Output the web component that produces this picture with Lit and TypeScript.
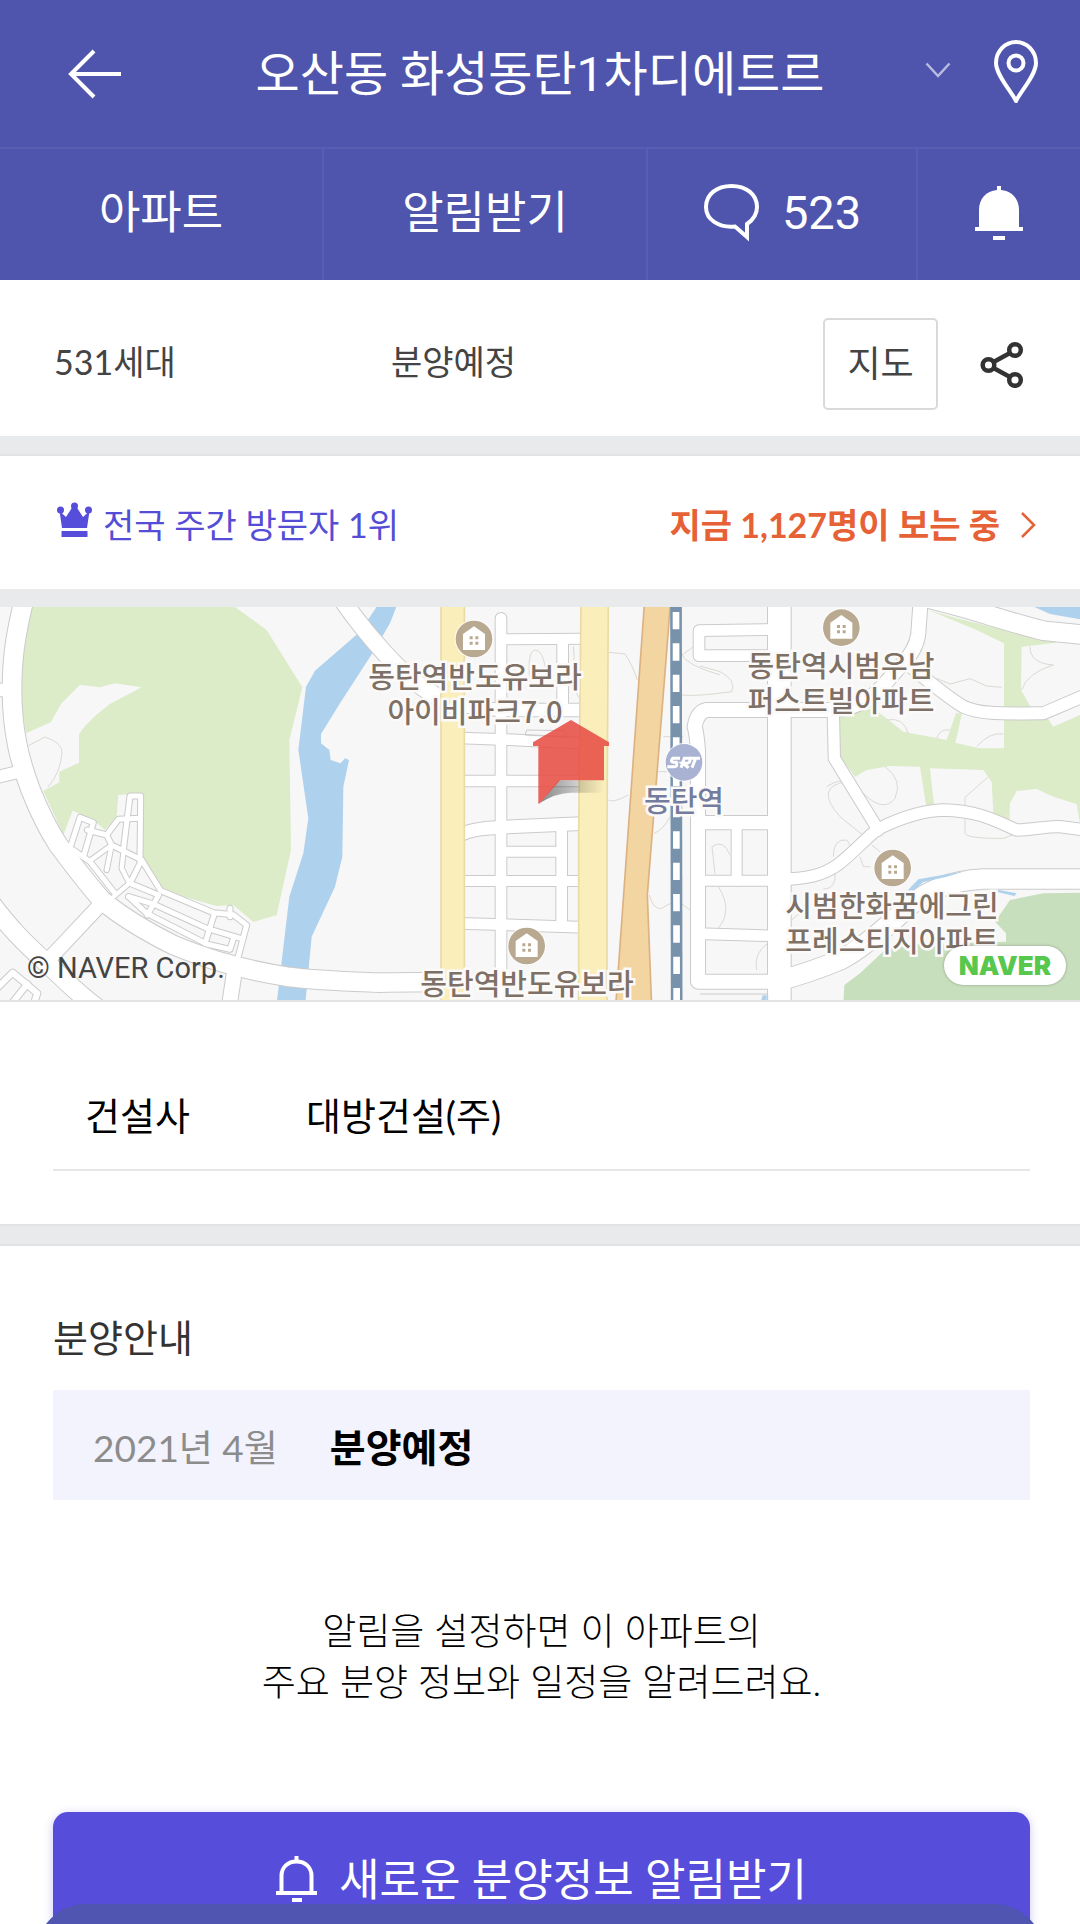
import { LitElement, html, svg, css } from "lit";
import { customElement } from "lit/decorators.js";

/* ---------- Map data (map units: three per pixel at a 1080px wide page) ---------- */

interface Road {
  d: string;
  w: number;
}

const ROADS: Road[] = [
  // western ring road and its branches
  { d: "M72 0C45 110 36 180 36 270C36 400 62 490 92 570C120 640 145 690 175 735C230 810 262 850 305 900C370 955 440 995 520 1035C640 1085 740 1110 860 1130C960 1142 1040 1144 1140 1148C1220 1146 1260 1146 1350 1146", w: 56 },
  { d: "M-20 270H36", w: 38 },
  { d: "M-20 534L70 512", w: 36 },
  { d: "M-30 905C30 985 70 1025 130 1080C180 1125 230 1180 300 1230", w: 54 },
  { d: "M140 1085L300 915", w: 42 },
  { d: "M704 1110L686 1230", w: 44 },
  { d: "M1020 -10C1060 50 1100 100 1150 155C1200 210 1250 260 1340 305", w: 50 },
  // central grid
  { d: "M1503 55V1230", w: 32 },
  { d: "M1503 118L1760 116", w: 30 },
  { d: "M1688 118V330", w: 32 },
  { d: "M1380 318L1503 330L1760 330", w: 38 },
  { d: "M1380 414L1503 418L1760 430", w: 32 },
  { d: "M1380 543H1760", w: 32 },
  { d: "M1380 706Q1410 686 1500 682L1760 670", w: 38 },
  { d: "M1685 670V980", w: 32 },
  { d: "M1503 755H1685", w: 30 },
  { d: "M1380 843H1760", w: 30 },
  { d: "M1380 970L1760 982", w: 32 },
  // east of the railway
  { d: "M2338 -20V1230", w: 68 },
  { d: "M2338 88L2097 92V167H2338", w: 32 },
  { d: "M2338 330H2120Q2092 335 2084 380Q2090 400 2094 450V1145H2338", w: 42 },
  { d: "M2094 668H2338", w: 40 },
  { d: "M2210 668V842", w: 30 },
  { d: "M2094 842H2338", w: 30 },
  { d: "M2094 1001L2338 1008", w: 32 },
  { d: "M2338 330H2500C2620 320 2650 250 2700 200C2740 160 2752 130 2755 100L2762 0", w: 42 },
  { d: "M2500 340L2503 475L2635 690", w: 34 },
  { d: "M2338 838C2420 838 2470 825 2515 793C2570 750 2610 700 2640 684C2700 655 2760 632 2830 630C2940 632 2990 665 3050 690C3100 690 3140 678 3180 680L3270 692", w: 34 },
  { d: "M2720 190C2780 240 2840 290 2890 320C2940 342 2990 341 3130 340L3270 280", w: 36 },
  { d: "M2760 -10C2900 20 3000 60 3130 92L3270 106", w: 56 },
  { d: "M3270 837H2950C2850 842 2780 870 2720 925C2650 990 2580 1050 2520 1080C2460 1105 2420 1120 2338 1142", w: 58 },
  // residential lanes
  { d: "M213 735L240 652L280 668L252 765", w: 15 },
  { d: "M205 740L270 785L345 880", w: 15 },
  { d: "M262 690L320 705L335 735L425 780L482 872L640 938L700 944L740 975L708 1095", w: 15 },
  { d: "M320 705L355 658L420 655", w: 15 },
  { d: "M370 750L390 588L422 588L420 780", w: 15 },
  { d: "M270 782L335 735L320 810", w: 13 },
  { d: "M370 760L365 805L388 850L335 895", w: 13 },
  { d: "M425 780L390 850L476 885L442 945", w: 15 },
  { d: "M386 890L460 912L620 985L722 1015", w: 15 },
  { d: "M386 890L440 940L620 1032L690 1048L702 1010", w: 15 },
  { d: "M642 945L615 1030", w: 15 },
  { d: "M690 950V925", w: 15 },
  { d: "M-20 1175L38 1118L112 1180L95 1230", w: 18 },
  { d: "M20 1230L82 1152", w: 18 },
];

const PATHS = [
  "M85 437L135 411Q190 430 186 460Q180 520 145 560",
  "M1590 250Q1580 150 1607 150Q1635 155 1640 240",
  "M1720 140Q1725 170 1720 200Q1722 290 1742 296",
  "M1827 157L1875 162Q1895 190 1912 240",
  "M1825 600Q1840 610 1885 585",
  "M1962 700Q1990 690 2010 650",
  "M1948 885Q1960 930 1985 925Q2030 890 2070 930",
  "M1990 410H2050M1975 515H2000",
  "M2046 165L2080 140M2046 165Q2060 195 2160 225M2046 285Q2090 290 2195 275Q2210 240 2160 215L2100 198",
  "M2136 740Q2170 715 2190 765M2136 740L2145 822",
  "M2155 860Q2200 930 2155 985",
  "M2270 1110Q2260 1060 2303 1030",
  "M2480 560Q2520 535 2540 545Q2440 560 2520 650L2600 715",
  "M2655 500Q2710 540 2685 595Q2650 640 2590 580",
  "M2810 235L2850 252L2910 236L2960 258L3005 262",
  "M3090 140Q3090 190 3160 195Q3080 220 3065 270",
  "M2965 530L2895 592V700Q2900 716 3010 715L3050 700",
  "M2500 770Q2500 715 2540 720Q2560 740 2545 760",
  "M2580 770L2590 800L2612 800M2615 735L2640 755",
  "M2930 440Q2970 395 3010 402M2810 415Q2820 385 2850 390",
  "M2660 360Q2710 350 2725 400",
  "M2375 960Q2400 935 2430 930",
  "M2505 820Q2510 865 2470 868",
];

const HOMES = [
  [1422, 117],
  [1580, 1038],
  [2524, 83],
  [2678, 804],
];

interface Place {
  x: number;
  y: number;
  lines: string[];
  station?: boolean;
}

/* Centres of the labels, in pixels of a 1080 x 393 map. */
const PLACES: Place[] = [
  { x: 475, y: 86, lines: ["동탄역반도유보라", "아이비파크7.0"] },
  { x: 527, y: 375, lines: ["동탄역반도유보라"] },
  { x: 841, y: 75, lines: ["동탄역시범우남", "퍼스트빌아파트"] },
  { x: 892, y: 315, lines: ["시범한화꿈에그린", "프레스티지아파트"] },
  { x: 684, y: 192, lines: ["동탄역"], station: true },
];

@customElement("location-map")
export class LocationMap extends LitElement {
  static styles = css`
    :host {
      display: block;
      border-bottom: 2px solid #e2e3e4;
    }
    .map {
      position: relative;
      overflow: hidden;
      aspect-ratio: 1080 / 393;
      background: #f7f7f7;
    }
    .canvas {
      display: block;
      width: 100%;
      height: 100%;
    }
    .place {
      position: absolute;
      transform: translate(-50%, -50%);
      font: 500 29px/35px "Noto Sans CJK KR", sans-serif;
      color: #7d7066;
      text-align: center;
      white-space: nowrap;
      -webkit-text-stroke: 5px #fbfaf8;
      paint-order: stroke fill;
    }
    .station {
      color: #747c9d;
    }
    .credit {
      position: absolute;
      left: 27px;
      bottom: 14px;
      font: 400 29px/36px Roboto, sans-serif;
      color: #444;
    }
    .brand {
      position: absolute;
      right: 14px;
      bottom: 15px;
      padding: 0 15px;
      border-radius: 20px;
      background: #fff;
      box-shadow: 0 0 3px rgba(0, 0, 0, 0.3);
      font: 900 26px/39px Inter, sans-serif;
      color: #57c74e;
      text-decoration: none;
    }
  `;

  render() {
    return html`
      <div class="map">
        <svg class="canvas" viewBox="0 21 3240 1179" preserveAspectRatio="none" aria-hidden="true">
          <defs>
            <linearGradient id="shade" x1="0" x2="1" y1="0" y2="0">
              <stop offset="0" stop-color="#000" stop-opacity=".45" />
              <stop offset="1" stop-color="#000" stop-opacity="0" />
            </linearGradient>
          </defs>
          <g fill="#dcebc8">
            <path d="M100 0H675L705 21L800 90L907 262L868 420L873 750L830 945L760 966L700 915L650 918L480 870L425 785L430 580L355 585L350 650L315 690L280 660L218 632L190 705L130 573L178 547V515L237 488V403Q260 365 330 312L425 262L345 250L300 262L240 254L185 310L152 367L78 400L62 300L70 150Z" />
            <path d="M2785 30L2870 55L3170 128L3065 140L3063 270L3090 318L3140 350L3160 380L3240 345V670L3230 612L3160 590L3110 567L3050 573L3030 610L3028 660L2980 640L2975 545L2950 510L2790 505L2802 615L2778 615L2760 500L2670 498L2600 510L2565 530L2520 470L2517 345L2620 325L2710 395L2840 420L2868 340H2886L2866 428L2935 445H3012V130L2930 90Z" />
          </g>
          <path fill="#c8dfbd" d="M2530 1215L2533 1155L2580 1120L2660 1045L2760 1030L3018 1025L3018 1000L2985 965L3030 900L3130 880L3240 878V1215Z" />
          <path fill="none" stroke="#dcd9d3" stroke-width="3" d=${PATHS.join("")} />
          <g fill="#aed1ee">
            <path d="M1135 0L1127 25L1080 95L945 212L918 260L895 450L925 655L910 760L868 890L842 1110L830 1210H916L935 1010L1005 860L1027 770L1030 560L1047 480L1035 475L1022 490L992 480L988 450L963 430V402L1020 310L1120 155L1170 70L1197 0Z" />
            <path d="M2284 1200L2288 1186H2300V1200Z" />
          </g>
          <g fill="none" stroke="#cbcbcb" stroke-linecap="round" stroke-linejoin="round">
            ${ROADS.map((r) => svg`<path d=${r.d} stroke-width=${r.w + 6} />`)}
          </g>
          <g fill="none" stroke="#fff" stroke-linecap="round" stroke-linejoin="round">
            ${ROADS.map((r) => svg`<path d=${r.d} stroke-width=${r.w} />`)}
          </g>
          <g fill="#aed1ee">
            <path d="M3090 15H3240V58L3150 42Z" />
            <path d="M2722 872L2755 838L2900 812L2840 830L2770 846L2740 872Z" />
            <path d="M2985 868L3050 880L3043 888L2995 877Z" />
          </g>
          <g fill="none" stroke="#cbcbcb" stroke-width="3">
            <path d="M1575 405L1580 390L1690 392L1700 412Z" />
            <path d="M2100 1182H2303V1205" />
          </g>
          <g fill="#faeebb" stroke="#e8dba6" stroke-width="5">
            <path d="M1323 0H1393V1220H1323Z" />
            <path d="M1743 0H1825L1821 700V1220H1736V700Z" />
          </g>
          <path fill="#f3d5a1" stroke="#dcb283" stroke-width="5" d="M1934 0H2012L1998 180L1942 885L1955 1220H1847Z" />
          <path fill="none" stroke="#7792aa" stroke-width="35" d="M2028 0L2030 1220" />
          <path fill="none" stroke="#fff" stroke-width="20" stroke-dasharray="52 42" d="M2028 36L2030 1220" />
          ${HOMES.map(
            ([x, y]) => svg`
              <g transform="translate(${x} ${y})">
                <circle r="58" fill="#fff" opacity=".8" />
                <circle r="55" fill="#b8a990" />
                <path fill="#fff" d="M0-38L33-15V33H-33V-15Z" />
                <path fill="#b8a990" d="M-13-8H-4V1H-13ZM4-8H13V1H4ZM-13 8H-4V17H-13ZM4 8H13V17H4Z" />
              </g>
            `,
          )}
          <circle cx="2052" cy="487" r="58" fill="#fff" opacity=".8" />
          <circle cx="2052" cy="487" r="55" fill="#a9b2d3" />
          <g fill="none" stroke="#fff" stroke-width="9">
            <path d="M2040 475H2018Q2009 486 2021 487H2029Q2034 499 2024 500H2002" />
            <path d="M2043 503L2053 475H2068Q2074 488 2060 490H2048L2066 503" />
            <path d="M2067 475H2100M2087 475L2076 503" />
          </g>
          <path fill="url(#shade)" d="M1620 609L1675 541H1812V578H1710Q1665 580 1620 609Z" />
          <path fill="#e64b41" opacity=".86" d="M1713 360L1827 427V438H1812V541H1680L1618 611H1615V438H1599V427Z" />
        </svg>
        ${PLACES.map(
          (p) => html`
            <div
              class="place ${p.station ? "station" : ""}"
              style="left:${(p.x / 1080) * 100}%;top:${(p.y / 393) * 100}%"
            >
              ${p.lines.map((line) => html`<div>${line}</div>`)}
            </div>
          `,
        )}
        <span class="credit">© NAVER Corp.</span>
        <a class="brand" href="#map">NAVER</a>
      </div>
    `;
  }
}

@customElement("app-root")
export class AppRoot extends LitElement {
  static styles = css`
    :host {
      display: block;
      position: relative;
      height: 100vh;
      overflow: hidden;
      background: #fff;
      color: #000;
      font: 400 38px/51px Lato, "Noto Sans CJK KR", sans-serif;
    }
    * {
      box-sizing: border-box;
    }
    h1,
    h2,
    p,
    dl,
    dd {
      margin: 0;
      font-weight: 400;
    }
    button {
      padding: 0;
      border: 0;
      background: none;
      color: inherit;
      font: inherit;
    }
    a {
      color: inherit;
      text-decoration: none;
    }
    svg {
      display: block;
    }
    .page {
      height: 100%;
      overflow-y: auto;
      scrollbar-width: none;
    }
    .header {
      background: #4f55ac;
      color: #fff;
      font-family: Roboto, "Noto Sans CJK KR", sans-serif;
    }
    .bar {
      display: grid;
      grid-template-columns: 1fr auto 1fr;
      align-items: center;
      height: 149px;
      padding: 0 41px;
      border-bottom: 2px solid #585eb1;
    }
    .back {
      justify-self: start;
      margin-left: 26px;
    }
    .title {
      padding-top: 2px;
      font-size: 48px;
      line-height: 64px;
    }
    .actions {
      display: flex;
      align-items: center;
      justify-content: flex-end;
      gap: 42px;
    }
    .tabs {
      display: grid;
      grid-template-columns: 30fr 30fr 25fr 15fr;
      height: 131px;
      font-size: 45px;
    }
    .tab {
      display: flex;
      align-items: center;
      justify-content: center;
      gap: 22px;
      padding-bottom: 3px;
      border-right: 2px solid #585eb1;
    }
    .tab:last-child {
      border-right: 0;
    }
    .count {
      padding-bottom: 2px;
      font-size: 47px;
    }
    .summary {
      display: flex;
      align-items: center;
      height: 156px;
      padding: 12px 56px 0 54px;
      color: #444;
      font-size: 34px;
    }
    .facts {
      display: grid;
      grid-template-columns: 1fr 1fr;
      flex: 1;
      margin-right: 95px;
      padding-bottom: 6px;
    }
    .map-button {
      width: 115px;
      height: 92px;
      margin-right: 42px;
      padding-bottom: 2px;
      border: 2px solid #d9d9d9;
      border-radius: 5px;
      font-size: 36px;
    }
    .band {
      height: 20px;
      background: #e9eaec;
      border-bottom: 2px solid #e2e3e5;
    }
    .band.plain {
      height: 18px;
      border-bottom: 0;
    }
    .band.ruled {
      height: 22px;
      border-top: 2px solid #e2e3e5;
    }
    .visitors {
      display: flex;
      align-items: center;
      justify-content: space-between;
      height: 133px;
      padding: 4px 44px 0 57px;
      font-size: 34px;
    }
    .rank {
      display: flex;
      align-items: center;
      gap: 11px;
      color: #554dd6;
    }
    .crown {
      margin-bottom: 10px;
    }
    .watching {
      display: flex;
      align-items: center;
      gap: 20px;
      color: #e66236;
      font-weight: 700;
    }
    .builder {
      padding: 60px 50px 53px 53px;
    }
    .row {
      display: flex;
      padding: 28px 32px;
      border-bottom: 2px solid #e6e7e8;
    }
    .row dt {
      width: 221px;
    }
    .guide {
      padding: 66px 50px 0 53px;
    }
    .heading {
      font-size: 38px;
      color: #333;
    }
    .schedule {
      display: flex;
      align-items: center;
      gap: 52px;
      height: 110px;
      margin-top: 27px;
      padding: 4px 40px 0;
      background: #f2f3fc;
    }
    .date {
      color: #8c8c8c;
      font-size: 37px;
    }
    .stage {
      font-size: 39px;
      font-weight: 700;
    }
    .note {
      margin: 105px 0;
      font-size: 37px;
      text-align: center;
      font-weight: 300;
    }
    .subscribe {
      display: flex;
      align-items: center;
      justify-content: center;
      gap: 22px;
      width: 100%;
      height: 136px;
      padding-bottom: 2px;
      border-radius: 15px;
      background: #564ddb;
      box-shadow: 0 2px 10px rgba(86, 77, 219, 0.3);
      color: #fff;
      font-size: 44px;
    }
    .sheet {
      position: absolute;
      left: 36px;
      right: 36px;
      bottom: 0;
      height: 20px;
      overflow: hidden;
    }
    .sheet-body {
      height: 100px;
      border-radius: 50px;
      background: #4f55b0;
    }
  `;

  render() {
    return html`
      <div class="page">
        <header class="header">
          <div class="bar">
            <a class="back" href="#back" aria-label="뒤로">
              <svg width="56" height="50" viewBox="0 0 56 50" fill="none" stroke="#fff" stroke-width="4">
                <path d="M27 2L4 25L27 48M4 25H54" />
              </svg>
            </a>
            <h1 class="title">오산동 화성동탄1차디에트르</h1>
            <div class="actions">
              <button aria-label="단지 선택">
                <svg width="26" height="24" viewBox="0 0 26 24" fill="none" stroke="#b9bbe1" stroke-width="2.500">
                  <path d="M1.500 1.500L13 14L24.500 1.500" />
                </svg>
              </button>
              <button aria-label="위치">
                <svg width="46" height="70" viewBox="0 0 46 70" fill="none" stroke="#fff" stroke-width="4">
                  <path d="M23 62C18 52 3 36 3 24A20 21 0 0 1 43 24C43 36 28 52 23 62Z" stroke-linejoin="round" />
                  <circle cx="23" cy="24" r="7.500" />
                </svg>
              </button>
            </div>
          </div>
          <nav class="tabs">
            <a class="tab" href="#apartment">아파트</a>
            <a class="tab" href="#alerts">알림받기</a>
            <a class="tab" href="#talk">
              <svg width="57" height="60" viewBox="0 0 57 60" fill="none" stroke="#fff" stroke-width="4">
                <path d="M44 54L32 43.500C16 45 3 37 3 24C3 11 14 3 28.500 3C43 3 54 11 54 24C54 31 50 37 44 41Z" />
              </svg>
              <span class="count">523</span>
            </a>
            <a class="tab" href="#notifications" aria-label="알림">
              <svg width="48" height="55" viewBox="0 0 48 55" fill="#fff">
                <path d="M22 0H26V4C37 5 44 13 44 24V41H48V45H0V41H4V24C4 13 11 5 22 4ZM18 50H30V54H18Z" />
              </svg>
            </a>
          </nav>
        </header>

        <section class="summary">
          <div class="facts">
            <span>531세대</span>
            <span>분양예정</span>
          </div>
          <button class="map-button">지도</button>
          <button aria-label="공유">
            <svg width="44" height="48" viewBox="0 0 44 48" fill="none" stroke="#333" stroke-width="4.500">
              <circle cx="8.500" cy="25" r="5.800" />
              <circle cx="35" cy="10" r="5.800" />
              <circle cx="35" cy="40" r="5.800" />
              <path d="M13.500 22L30 13M13.500 28L30 37" />
            </svg>
          </button>
        </section>
        <div class="band"></div>

        <section class="visitors">
          <div class="rank">
            <svg class="crown" width="35" height="35" viewBox="0 0 35 35" fill="#564ddb">
              <path d="M5 26L2.500 9L9 15L15.500 5H19.500L26 15L32.500 9L30 26Z" />
              <circle cx="3.500" cy="8" r="3.500" />
              <circle cx="17.500" cy="4" r="3.500" />
              <circle cx="31.500" cy="8" r="3.500" />
              <path d="M4.500 29H30.500V35H4.500Z" />
            </svg>
            <span>전국 주간 방문자 1위</span>
          </div>
          <a class="watching" href="#live">
            지금 1,127명이 보는 중
            <svg width="16" height="28" viewBox="0 0 16 28" fill="none" stroke="#e66236" stroke-width="2.500">
              <path d="M2 2L14 14L2 26" />
            </svg>
          </a>
        </section>
        <div class="band plain"></div>

        <location-map id="map"></location-map>

        <section class="builder">
          <dl class="row">
            <dt>건설사</dt>
            <dd>대방건설(주)</dd>
          </dl>
        </section>
        <div class="band ruled"></div>

        <section class="guide">
          <h2 class="heading">분양안내</h2>
          <div class="schedule">
            <span class="date">2021년 4월</span>
            <span class="stage">분양예정</span>
          </div>
          <p class="note">알림을 설정하면 이 아파트의<br />주요 분양 정보와 일정을 알려드려요.</p>
          <button class="subscribe">
            <svg width="41" height="46" viewBox="0 0 41 46" fill="none" stroke="#fff">
              <path d="M5.500 36V20C5.500 11 12 5.500 20.500 5.500S35.500 11 35.500 20V36" stroke-width="4" />
              <path d="M0 37H41M20.500 0V6M16 44H26" stroke-width="4" />
            </svg>
            새로운 분양정보 알림받기
          </button>
        </section>
      </div>
      <div class="sheet" aria-hidden="true"><div class="sheet-body"></div></div>
    `;
  }
}
